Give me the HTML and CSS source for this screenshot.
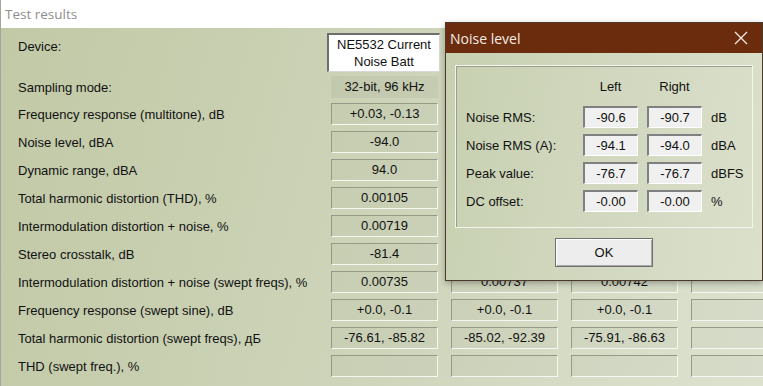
FILE: index.html
```html
<!DOCTYPE html>
<html lang="en">
<head>
  <meta charset="UTF-8">
  <meta name="viewport" content="width=device-width, initial-scale=1.0">
  <title>Test results</title>
  <link rel="stylesheet" href="styles.css">
</head>
<body>
  <div class="window">
    <div class="titlebar">Test results</div>

    <div class="results">
      <div class="row row-device">
        <div class="label">Device:</div>
        <div class="device-box">NE5532 Current<br>Noise Batt</div>
        <div class="device-box"></div>
        <div class="device-box"></div>
        <div class="device-box"></div>
      </div>
      <div class="row row-sampling">
        <div class="label">Sampling mode:</div>
        <div class="mode-box">32-bit, 96 kHz</div>
        <div class="mode-box"></div>
        <div class="mode-box"></div>
        <div class="mode-box"></div>
      </div>
      <div class="row">
        <div class="label">Frequency response (multitone), dB</div>
        <div class="value">+0.03, -0.13</div>
        <div class="value"></div>
        <div class="value"></div>
        <div class="value"></div>
      </div>
      <div class="row">
        <div class="label">Noise level, dBA</div>
        <div class="value">-94.0</div>
        <div class="value"></div>
        <div class="value"></div>
        <div class="value"></div>
      </div>
      <div class="row">
        <div class="label">Dynamic range, dBA</div>
        <div class="value">94.0</div>
        <div class="value"></div>
        <div class="value"></div>
        <div class="value"></div>
      </div>
      <div class="row">
        <div class="label">Total harmonic distortion (THD), %</div>
        <div class="value">0.00105</div>
        <div class="value"></div>
        <div class="value"></div>
        <div class="value"></div>
      </div>
      <div class="row">
        <div class="label">Intermodulation distortion + noise, %</div>
        <div class="value">0.00719</div>
        <div class="value"></div>
        <div class="value"></div>
        <div class="value"></div>
      </div>
      <div class="row">
        <div class="label">Stereo crosstalk, dB</div>
        <div class="value">-81.4</div>
        <div class="value"></div>
        <div class="value"></div>
        <div class="value"></div>
      </div>
      <div class="row">
        <div class="label">Intermodulation distortion + noise (swept freqs), %</div>
        <div class="value">0.00735</div>
        <div class="value">0.00737</div>
        <div class="value">0.00742</div>
        <div class="value"></div>
      </div>
      <div class="row">
        <div class="label">Frequency response (swept sine), dB</div>
        <div class="value">+0.0, -0.1</div>
        <div class="value">+0.0, -0.1</div>
        <div class="value">+0.0, -0.1</div>
        <div class="value"></div>
      </div>
      <div class="row">
        <div class="label">Total harmonic distortion (swept freqs), дБ</div>
        <div class="value">-76.61, -85.82</div>
        <div class="value">-85.02, -92.39</div>
        <div class="value">-75.91, -86.63</div>
        <div class="value"></div>
      </div>
      <div class="row">
        <div class="label">THD (swept freq.), %</div>
        <div class="value"></div>
        <div class="value"></div>
        <div class="value"></div>
        <div class="value"></div>
      </div>
    </div>
  </div>

  <!-- Noise level dialog -->
  <div class="dialog">
    <div class="dialog-title">
      <span>Noise level</span>
      <svg class="close-icon" width="14" height="14" viewBox="0 0 14 14">
        <path d="M1 1 L13 13 M13 1 L1 13" stroke="#f4ece6" stroke-width="1.3" fill="none"/>
      </svg>
    </div>
    <div class="dialog-body">
      <div class="group">
        <div class="noise-grid">
          <div></div>
          <div class="col-head">Left</div>
          <div class="col-head">Right</div>
          <div></div>

          <div class="noise-label">Noise RMS:</div>
          <div class="field">-90.6</div>
          <div class="field">-90.7</div>
          <div class="unit">dB</div>

          <div class="noise-label">Noise RMS (A):</div>
          <div class="field">-94.1</div>
          <div class="field">-94.0</div>
          <div class="unit">dBA</div>

          <div class="noise-label">Peak value:</div>
          <div class="field">-76.7</div>
          <div class="field">-76.7</div>
          <div class="unit">dBFS</div>

          <div class="noise-label">DC offset:</div>
          <div class="field">-0.00</div>
          <div class="field">-0.00</div>
          <div class="unit">%</div>
        </div>
      </div>
      <button class="ok-btn">OK</button>
    </div>
  </div>
</body>
</html>
```

FILE: styles.css
```css
/* General body styling */
body {
  margin: 0;
  padding: 0;
  width: 763px;
  height: 386px;
  overflow: hidden;
  position: relative;
  font-family: "Liberation Sans", Arial, sans-serif;
  font-size: 13px;
  color: #111111;
  background-color: #ffffff;
}

/* Main window */
.window {
  height: 386px;
  border-left: 1px solid #a3a69a;
  display: flex;
  flex-direction: column;
  overflow: hidden;
}

.titlebar {
  height: 28px;
  line-height: 28px;
  padding-left: 4px;
  background-color: #ffffff;
  color: #8e8e8e;
  font-family: "Open Sans", "Noto Sans", sans-serif;
  font-size: 13.5px;
}

.results {
  flex: 1;
  padding: 5px 0 0 17px;
  display: flex;
  flex-direction: column;
  gap: 6px;
  background: linear-gradient(105deg, #c1c9a6 0%, #cdd4b9 50%, #dde2cf 100%);
}

.row {
  display: grid;
  grid-template-columns: 300px repeat(4, 107px);
  column-gap: 13px;
  height: 22px;
  align-items: center;
}

.row-device {
  height: 39px;
  align-items: start;
  margin-bottom: -2px;
}

.row-device .label {
  padding-top: 6px;
}

.row-sampling {
  margin-bottom: -1px;
}

.label {
  white-space: nowrap;
}

/* Value boxes */
.value {
  height: 20px;
  line-height: 20px;
  text-align: center;
  border-top: 1px solid #959a87;
  border-left: 1px solid #959a87;
  border-bottom: 1px solid #f6f7f0;
  border-right: 1px solid #f6f7f0;
  background-color: rgba(0, 0, 0, 0.025);
}

.device-box {
  height: 35px;
  margin: 0 -2px 0 -4px;
  padding-top: 1px;
  line-height: 17px;
  text-align: center;
  background-color: #ffffff;
  border-top: 2px solid #6e6e6e;
  border-left: 2px solid #6e6e6e;
  border-bottom: 1px solid #d8d8d8;
  border-right: 1px solid #d8d8d8;
}

.mode-box {
  height: 22px;
  line-height: 22px;
  text-align: center;
  background-color: rgba(0, 0, 0, 0.04);
}

/* Noise level dialog */
.dialog {
  position: absolute;
  left: 445px;
  top: 22px;
  width: 316px;
  border: 1px solid #4b3a2c;
  box-shadow: 0 2px 6px rgba(0, 0, 0, 0.3);
}

.dialog-title {
  height: 30px;
  padding: 0 14px 0 4px;
  display: flex;
  justify-content: space-between;
  align-items: center;
  background-color: #6b2c0d;
  color: #f4ece6;
  font-family: "Open Sans", "Noto Sans", sans-serif;
  font-size: 14px;
}

.dialog-body {
  padding: 12px 9px 13px 9px;
  display: flex;
  flex-direction: column;
  align-items: center;
  background: linear-gradient(100deg, #c8d0b1 0%, #d1d8bf 50%, #dbe0cb 100%);
}

.group {
  align-self: stretch;
  height: 163px;
  border: 1px solid #f3f5ec;
  box-shadow: inset 1px 1px 0 #9aa08b;
  padding: 6px 0 0 10px;
  box-sizing: border-box;
}

.noise-grid {
  display: grid;
  grid-template-columns: 108px 55px 55px auto;
  grid-template-rows: 28px repeat(4, 22px);
  column-gap: 9px;
  row-gap: 6px;
  align-items: center;
}

.col-head {
  text-align: center;
}

.noise-label {
  white-space: nowrap;
}

.field {
  height: 19px;
  line-height: 19px;
  text-align: center;
  background-color: #f0f0f0;
  border-top: 2px solid #808080;
  border-left: 2px solid #808080;
  border-bottom: 1px solid #ffffff;
  border-right: 1px solid #ffffff;
}

.unit {
  white-space: nowrap;
}

/* OK button */
.ok-btn {
  margin-top: 10px;
  width: 98px;
  height: 29px;
  font-family: "Liberation Sans", Arial, sans-serif;
  font-size: 13px;
  color: #111111;
  background-color: #ededed;
  border: 1px solid #6f6f6f;
  box-shadow: inset 1px 1px 0 #ffffff, inset -1px -1px 0 #a8a8a8;
  padding: 0;
}
```
